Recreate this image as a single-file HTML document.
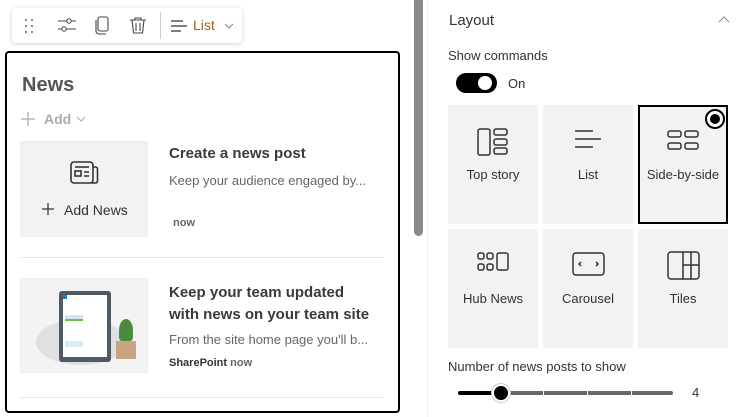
<!DOCTYPE html>
<html><head><style>
*{box-sizing:border-box;margin:0;padding:0}
body{width:743px;height:417px;overflow:hidden;background:#fff;font-family:"Liberation Sans",sans-serif;color:#323130;position:relative}
.abs{position:absolute}
.tb{left:12px;top:8px;width:230px;height:35px;background:#fff;border-radius:4px;box-shadow:0 1px 5px rgba(0,0,0,.18)}
.frame{left:5px;top:51px;width:395px;height:362px;border:2px solid #000;border-radius:4px}
.tile{background:#f3f2f1;width:90px;height:119px;position:absolute}
.tile .lb{position:absolute;top:62px;left:0;width:100%;text-align:center;font-size:13px;color:#323130}
.tile svg{position:absolute;left:29px;top:22px}
</style></head><body>
<div class="abs tb">
 <svg class="abs" style="left:12px;top:10px" width="12" height="16"><g fill="#666"><circle cx="2" cy="2" r="1"/><circle cx="8" cy="2" r="1"/><circle cx="2" cy="8" r="1"/><circle cx="8" cy="8" r="1"/><circle cx="2" cy="14" r="1"/><circle cx="8" cy="14" r="1"/></g></svg>
 <svg class="abs" style="left:45px;top:8px" width="20" height="18" fill="none" stroke="#444" stroke-width="1"><path d="M1 5h18M1 13h18"/><circle cx="12" cy="5" r="2.2" fill="#fff"/><circle cx="7" cy="13" r="2.2" fill="#fff"/></svg>
 <svg class="abs" style="left:82px;top:8px" width="16" height="20" fill="none" stroke="#444" stroke-width="1.1"><rect x="4" y="1" width="10" height="14" rx="2"/><path d="M2 4v11a3 3 0 0 0 3 3h7"/></svg>
 <svg class="abs" style="left:117px;top:8px" width="18" height="20" fill="none" stroke="#444" stroke-width="1.1"><path d="M1 4h16M6 4V2h6v2M3 4l1.5 13h9L15 4M7 7v8M11 7v8"/></svg>
 <div class="abs" style="left:148px;top:4px;width:1px;height:27px;background:#ccc"></div>
 <svg class="abs" style="left:158px;top:11px" width="18" height="14" stroke="#333" stroke-width="1.3"><path d="M1 2h12M1 7h16M1 12h10"/></svg>
 <div class="abs" style="left:181px;top:9px;font-size:14px;color:#a4631a">List</div>
 <svg class="abs" style="left:212px;top:15px" width="10" height="6" fill="none" stroke="#888"><path d="M1 1l4 4 4-4"/></svg>
</div>
<div class="abs frame"></div>
<div class="abs" style="left:22px;top:74px;font-size:20px;font-weight:bold;color:#555">News</div>
<svg class="abs" style="left:21px;top:112px" width="14" height="14" stroke="#aaa" stroke-width="1.2"><path d="M7 0v14M0 7h14"/></svg>
<div class="abs" style="left:44px;top:111px;font-size:14px;font-weight:bold;color:#aaa">Add</div>
<svg class="abs" style="left:76px;top:116px" width="10" height="6" fill="none" stroke="#aaa"><path d="M1 1l4 4 4-4"/></svg>
<div class="abs" style="left:20px;top:141px;width:128px;height:96px;background:#f3f2f1;border:1px solid #eee"></div>
<svg class="abs" style="left:70px;top:161px" width="29" height="24" fill="none" stroke="#333" stroke-width="1.6"><rect x="1" y="1" width="22" height="21" rx="3"/><path d="M23 6h2.5a2 2 0 0 1 2 2v12a2 2 0 0 1-2 2H21"/><path d="M5 6h14"/><rect x="5" y="10" width="6" height="5"/><path d="M14 11h5M14 15h5"/></svg>
<svg class="abs" style="left:42px;top:203px" width="12" height="12" stroke="#333" stroke-width="1.2"><path d="M6 0v12M0 6h12"/></svg>
<div class="abs" style="left:64px;top:202px;font-size:14px;color:#333">Add News</div>
<div class="abs" style="left:169px;top:145px;font-size:15px;font-weight:bold;color:#3a3a3a">Create a news post</div>
<div class="abs" style="left:169px;top:173px;font-size:13px;color:#666">Keep your audience engaged by...</div>
<div class="abs" style="left:173px;top:217px;font-size:11px;font-weight:bold;color:#666">now</div>
<div class="abs" style="left:20px;top:257px;width:364px;height:1px;background:#e8e8e8"></div>
<div class="abs" style="left:20px;top:278px;width:128px;height:95px;background:#f3f3f3;border:1px solid #eee;overflow:hidden">
 <div class="abs" style="left:15px;top:40px;width:90px;height:46px;border-radius:50%;background:#e0e0e3"></div>
 <div class="abs" style="left:38px;top:12px;width:52px;height:71px;background:#505a64;border-radius:3px"></div>
 <div class="abs" style="left:42px;top:16px;width:44px;height:62px;background:#fff"></div>
 <div class="abs" style="left:42px;top:16px;width:4px;height:4px;background:#1a7fd0"></div>
 <div class="abs" style="left:44px;top:36px;width:18px;height:6px;background:#cfe6f5;border-bottom:2px solid #6bbf4e"></div>
 <div class="abs" style="left:44px;top:62px;width:18px;height:6px;background:#d8ecf8"></div>
 <div class="abs" style="left:95px;top:62px;width:20px;height:18px;background:#c9a482"></div>
 <div class="abs" style="left:98px;top:40px;width:14px;height:22px;background:#4c8a3e;border-radius:50% 50% 20% 20%"></div>
</div>
<div class="abs" style="left:169px;top:282px;font-size:15px;font-weight:bold;color:#3a3a3a;line-height:22px">Keep your team updated<br>with news on your team site</div>
<div class="abs" style="left:169px;top:332px;font-size:13px;color:#666">From the site home page you'll b...</div>
<div class="abs" style="left:169px;top:357px;font-size:11px;color:#333"><b>SharePoint</b> <b style="color:#666">now</b></div>
<div class="abs" style="left:20px;top:397px;width:364px;height:1px;background:#e8e8e8"></div>

<div class="abs" style="left:414px;top:0;width:9px;height:236px;background:#8a8a8a;border-radius:0 0 5px 5px"></div>
<div class="abs" style="left:427px;top:0;width:1px;height:417px;background:#eee"></div>

<div class="abs" style="left:449px;top:12px;font-size:15px;color:#333">Layout</div>
<svg class="abs" style="left:718px;top:16px" width="12" height="8" fill="none" stroke="#888"><path d="M1 6l5-5 5 5"/></svg>
<div class="abs" style="left:448px;top:48px;font-size:13px;color:#333">Show commands</div>
<div class="abs" style="left:456px;top:73px;width:41px;height:20px;background:#000;border-radius:10px"></div>
<div class="abs" style="left:478px;top:76px;width:14px;height:14px;background:#fff;border-radius:50%"></div>
<div class="abs" style="left:508px;top:76px;font-size:13px;color:#333">On</div>

<div class="tile" style="left:448px;top:105px"><svg width="33" height="30" fill="none" stroke="#333" stroke-width="1.5" style="top:23px"><rect x="1" y="1" width="12" height="26" rx="2"/><rect x="17" y="1" width="13" height="6" rx="2"/><rect x="17" y="11" width="13" height="6" rx="2"/><rect x="17" y="20" width="13" height="6" rx="2"/></svg><div class="lb">Top story</div></div>
<div class="tile" style="left:543px;top:105px"><svg width="33" height="30" fill="none" stroke="#333" stroke-width="1.5" style="left:31px;top:24px"><path d="M1 2h18M1 10h26M1 18h18"/></svg><div class="lb">List</div></div>
<div class="tile" style="left:638px;top:105px;border:2px solid #000"><svg width="33" height="30" fill="none" stroke="#333" stroke-width="1.5" style="left:27px;top:23px"><rect x="1" y="1" width="13" height="6" rx="2"/><rect x="18" y="1" width="13" height="6" rx="2"/><rect x="1" y="13" width="13" height="6" rx="2"/><rect x="18" y="13" width="13" height="6" rx="2"/></svg><div class="lb" style="top:60px">Side-by-side</div>
<div class="abs" style="left:65px;top:2px;width:20px;height:20px;border-radius:50%;background:#fff;border:2px solid #000"></div><div class="abs" style="left:70px;top:7px;width:10px;height:10px;border-radius:50%;background:#000"></div></div>
<div class="tile" style="left:448px;top:229px"><svg width="34" height="24" fill="none" stroke="#333" stroke-width="1.5" style="top:23px"><rect x="1" y="1" width="6" height="6" rx="2"/><rect x="10" y="1" width="6" height="6" rx="2"/><rect x="1" y="12" width="6" height="6" rx="2"/><rect x="10" y="12" width="6" height="6" rx="2"/><rect x="20" y="1" width="11" height="17" rx="2"/></svg><div class="lb">Hub News</div></div>
<div class="tile" style="left:543px;top:229px"><svg width="34" height="26" fill="none" stroke="#333" stroke-width="1.5" style="top:23px"><rect x="1" y="1" width="31" height="22" rx="3"/><path d="M9 10l-2 2 2 2M24 10l2 2-2 2"/></svg><div class="lb">Carousel</div></div>
<div class="tile" style="left:638px;top:229px"><svg width="34" height="30" fill="none" stroke="#333" stroke-width="1.5" style="top:22px"><rect x="1" y="1" width="31" height="27" rx="3"/><path d="M16 1v27M24 1v27M16 14h16"/></svg><div class="lb">Tiles</div></div>

<div class="abs" style="left:448px;top:359px;font-size:13px;color:#333">Number of news posts to show</div>
<div class="abs" style="left:458px;top:391px;width:215px;height:4px;background:#666;border-radius:2px"></div>
<div class="abs" style="left:458px;top:391px;width:43px;height:4px;background:#000;border-radius:2px"></div>
<div class="abs" style="left:543px;top:390px;width:1px;height:6px;background:#fff"></div>
<div class="abs" style="left:587px;top:390px;width:1px;height:6px;background:#fff"></div>
<div class="abs" style="left:631px;top:390px;width:1px;height:6px;background:#fff"></div>
<div class="abs" style="left:492px;top:384px;width:18px;height:18px;border-radius:50%;background:#000;border:2px solid #fff;box-shadow:0 0 0 1px #ccc"></div>
<div class="abs" style="left:692px;top:385px;font-size:13px;color:#333">4</div>
</body></html>
